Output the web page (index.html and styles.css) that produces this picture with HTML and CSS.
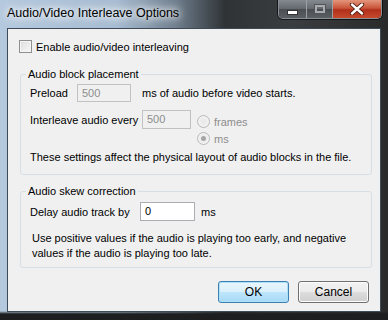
FILE: index.html
```html
<!DOCTYPE html>
<html lang="en">
<head>
<meta charset="UTF-8">
<title>Audio/Video Interleave Options</title>
<link rel="stylesheet" href="styles.css">
</head>
<body>
<div class="window">
  <div class="titlebar">
    <div class="title">Audio/Video Interleave Options</div>
    <div class="controls">
      <div class="cbtn min"><span class="glyph-min"></span></div>
      <div class="cbtn max"><span class="glyph-max"></span></div>
      <div class="cbtn close">
        <svg width="16" height="12" viewBox="0 0 16 12">
          <path d="M3 1.5 L13 10.5 M13 1.5 L3 10.5" stroke="#4a1a10" stroke-width="4.2" stroke-linecap="round"/>
          <path d="M3 1.5 L13 10.5 M13 1.5 L3 10.5" stroke="#fff" stroke-width="2.4" stroke-linecap="round"/>
        </svg>
      </div>
    </div>
  </div>

  <div class="client">
    <label class="check-row"><span class="checkbox"></span>Enable audio/video interleaving</label>

    <fieldset class="group placement">
      <legend>Audio block placement</legend>
      <div class="row">
        <span class="lbl lbl-preload">Preload</span>
        <span class="edit disabled w-preload">500</span>
        <span class="after">ms of audio before video starts.</span>
      </div>
      <div class="row row-interleave">
        <span class="lbl lbl-every">Interleave audio every</span>
        <span class="edit disabled w-every">500</span>
        <div class="radios">
          <div class="radio-row"><span class="radio"></span>frames</div>
          <div class="radio-row"><span class="radio on"></span>ms</div>
        </div>
      </div>
      <p class="note">These settings affect the physical layout of audio blocks in the file.</p>
    </fieldset>

    <fieldset class="group skew">
      <legend>Audio skew correction</legend>
      <div class="row">
        <span class="lbl lbl-delay">Delay audio track by</span>
        <span class="edit w-delay">0</span>
        <span class="unit">ms</span>
      </div>
      <p class="note note-skew">Use positive values if the audio is playing too early, and negative values if the audio is playing too late.</p>
    </fieldset>

    <div class="buttons">
      <button class="btn default">OK</button>
      <button class="btn">Cancel</button>
    </div>
  </div>
</div>
</body>
</html>
```

FILE: styles.css
```css
* { margin:0; padding:0; box-sizing:border-box; }
body { width:388px; height:320px; overflow:hidden; background:#222; font-family:'Liberation Sans',Arial,sans-serif; font-size:11px; color:#000; }

/* window frame */
.window { width:388px; height:320px; display:flex; flex-direction:column;
  background:
    linear-gradient(to bottom, rgba(0,0,0,0) 311px, #1c1e20 314px),
    linear-gradient(to right, #b5c9de 0, #a7bcd2 30%, #70808f 45%, #2f3336 58%, #3a3d40 75%, #2a2a2a 100%); }
.titlebar { height:28px; display:flex; align-items:flex-start; padding-left:7px; }
.title { margin-top:6px; font-size:12.5px; color:#000; text-shadow:0 0 6px #fff, 0 0 10px #fff, 0 0 14px rgba(255,255,255,0.9); }
.controls { margin-left:auto; margin-right:6px; display:flex; height:19px; border:1px solid #8a8f95; border-top:none; border-radius:0 0 5px 5px; overflow:hidden; box-shadow:0 0 0 1px rgba(0,0,0,0.6); }
.cbtn { height:18px; display:flex; align-items:center; justify-content:center; }
.cbtn.min { width:28px; background:linear-gradient(#858a91, #63686e 50%, #4a4e53 51%, #5a5f64); border-right:1px solid #9aa0a6; }
.cbtn.max { width:26px; background:linear-gradient(#858a91, #63686e 50%, #4a4e53 51%, #5a5f64); border-right:1px solid #9aa0a6; }
.cbtn.close { width:48px; background:linear-gradient(#e4957c, #c9553a 45%, #b1301b 55%, #c64a2c); }
.glyph-min { width:9px; height:3px; background:#fff; margin-top:6px; box-shadow:0 0 0 1px #333; }
.glyph-max { width:10px; height:8px; border:2px solid #a7abb0; box-shadow:0 0 0 1px #555; }

/* client area */
.client { flex:1; margin:0 7px 8px; background:#f0f0f0; border:1px solid #3d4a57; padding:10px 11px 0 11px; display:flex; flex-direction:column; }
.check-row { display:flex; align-items:center; height:15px; }
.checkbox { width:13px; height:13px; border:1px solid #8e8f8f; background:linear-gradient(135deg,#dcdcdc,#f8f8f8); box-shadow:inset 0 0 0 1px #f4f4f4; margin-right:4px; }

.group { border:1px solid #d5dfe5; border-radius:3px; padding:0 0 0 9px; margin-left:1px; width:352px; }
.group legend { padding:0 2px; margin-left:-4px; line-height:14px; }
.placement { margin-top:13px; height:108px; }
.skew { margin-top:9px; height:84px; }

.row { display:flex; align-items:center; white-space:nowrap; }
.placement .row:first-of-type { margin-top:3px; }
.lbl-preload { width:47px; }
.lbl-every { width:112px; }
.lbl-delay { width:110px; }
.edit { height:19px; border:1px solid #abadb3; background:#fff; padding:1px 0 0 4px; line-height:15px; }
.edit.disabled { border-color:#c2c2c2; background:#f0f0f0; color:#8d8d8d; }
.w-preload { width:54px; height:18px; }
.w-every { width:49px; }
.w-delay { width:55px; }
.after { margin-left:11px; }
.row-interleave { margin-top:8px; align-items:flex-start; }
.row-interleave .lbl { margin-top:4px; }
.radios { margin-left:6px; margin-top:3px; }
.radio-row { display:flex; align-items:center; height:17px; color:#8d8d8d; }
.radio { width:13px; height:13px; border-radius:50%; border:1px solid #b9b9b9; background:radial-gradient(circle,#e8e8e8,#f6f6f6); margin-right:4px; position:relative; }
.radio.on::after { content:""; position:absolute; left:3px; top:3px; width:5px; height:5px; border-radius:50%; background:#a6a6a6; }
.note { margin-top:5px; white-space:nowrap; }
.placement .note { margin-top:4px; }
.skew .row { margin-top:4px; }
.unit { margin-left:6px; }
.note-skew { margin-top:10px; margin-left:2px; line-height:15px; width:330px; white-space:normal; }

.buttons { display:flex; justify-content:flex-end; gap:9px; margin-top:13px; }
.btn { width:71px; height:22px; font-family:inherit; font-size:12px; color:#000; border:1px solid #707070; border-radius:3px; background:linear-gradient(#f2f2f2, #ebebeb 50%, #dddddd 51%, #cfcfcf); box-shadow:inset 0 0 0 1px #fcfcfc; }
.btn.default { border-color:#3c7fb1; background:linear-gradient(#eaf6fd, #d9f0fc 50%, #bee6fd 51%, #a7d9f5); box-shadow:inset 0 0 0 1px #aee1f8; }
```
